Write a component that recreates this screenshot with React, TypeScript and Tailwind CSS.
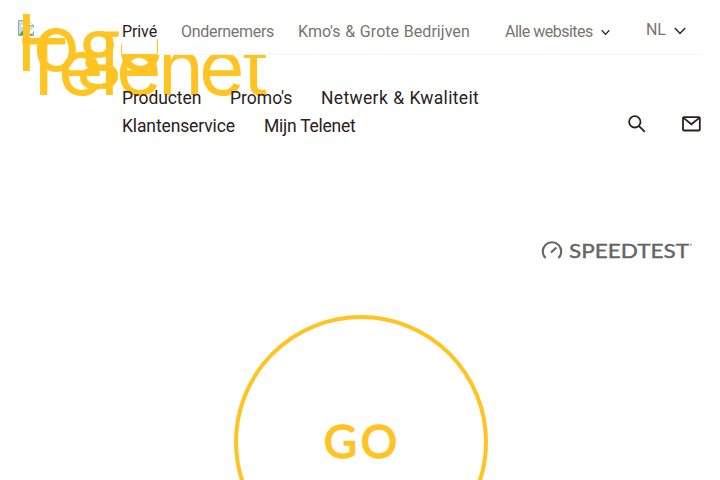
const topLinks = [
  { label: "Ondernemers", cls: "w-[116px] ml-[1px] pl-[23px] tracking-[-0.3px]" },
  { label: "Kmo's & Grote Bedrijven", cls: "w-[196px] pl-[24px] tracking-[0.05px] [word-spacing:0.6px]" },
];

function Chevron({ size, width }: { size: number; width: number }) {
  return (
    <svg width={size} height={size} viewBox="0 0 12 12" fill="none" stroke="#2a211c" strokeWidth={width}>
      <path d="M.9 3 6 8.4 11.1 3" />
    </svg>
  );
}

function BrokenImage() {
  return (
    <svg width="16" height="16" viewBox="0 0 16 16">
      <path d="M.5.5h10l5 5v10H.5z" fill="#c6d9f7" stroke="#a3a3a3" />
      <path d="M1 15 6 9l9 6z" fill="#4caf45" />
      <path d="M3 6q1-2 3-1 2 0 2 2H3z" fill="#fff" />
      <path d="M10.5.5v5h5" fill="#fff" stroke="#a3a3a3" />
      <path d="M16 7 7 16h3l6-5z" fill="#fff" />
    </svg>
  );
}

function Logo() {
  return (
    <div className="absolute left-[18px] top-[20px]">
      <BrokenImage />
      <svg className="absolute left-[-18px] top-[-20px]" width="280" height="110" fill="#ffc421" fontFamily="Inter, sans-serif" fontSize="78">
        <text y="71" x="17 33">lo</text>
        <text y="71" x="79.5" fontFamily="Open Sans, sans-serif" fontSize="74" stroke="#ffc421" strokeWidth=".8">g</text>
        <text y="71" x="117">o</text>
        <text y="95" x="18.5 58 100 116 158 199 243">Telenet</text>
      </svg>
    </div>
  );
}

function Header() {
  return (
    <header className="relative h-[145px] whitespace-nowrap">
      <Logo />
      <div className="relative ml-[122px] mr-[18px]">
        <div className="flex h-[55px] border-b border-[#f4f4f3] text-[16px] leading-[21px] text-[#7a736e]">
          <a className="h-[56px] w-[35px] border-b-2 border-[#ffc421] bg-white pt-[21px] tracking-[-0.1px] text-[#2a211c]">Privé</a>
          {topLinks.map((l) => (
            <a key={l.label} className={`bg-white pt-[21px] ${l.cls}`}>{l.label}</a>
          ))}
          <a className="ml-[35px] flex w-[106px] gap-[8px] pt-[21px]">
            <span className="w-[88px] tracking-[-0.5px]">Alle websites</span>
            <span className="pt-[7px]"><Chevron size={9} width={1.6} /></span>
          </a>
          <a className="ml-[35px] flex gap-[8px] pt-[19px]">
            <span className="w-[20px] tracking-[-0.2px]">NL</span>
            <span className="pt-[6px]"><Chevron size={12} width={1.4} /></span>
          </a>
        </div>
        <div className="flex justify-between pt-[29px] text-[#2a211c]">
          <nav className="text-[17.5px] leading-[28px]">
            <div className="flex gap-[29px]">
              <a className="w-[79px] tracking-[-0.1px]">Producten</a>
              <a className="w-[62px]">Promo's</a>
              <a className="tracking-[0.34px] [word-spacing:0.4px]">Netwerk &amp; Kwaliteit</a>
            </div>
            <div className="flex gap-[29px]">
              <a className="w-[113px] tracking-[-0.13px]">Klantenservice</a>
              <a className="tracking-[-0.25px]">Mijn Telenet</a>
            </div>
          </nav>
          <div className="flex gap-[35px] pt-[30px]">
            <svg width="20" height="20" viewBox="0 0 20 20" fill="none" stroke="#2a211c" strokeWidth="1.8">
              <circle cx="7.8" cy="7.8" r="5.7" />
              <path d="m11.8 11.8 6 6" />
            </svg>
            <svg width="20" height="20" viewBox="0 0 20 20" fill="none" stroke="#2a211c" strokeWidth="1.8">
              <rect x="1" y="3.1" width="16.8" height="13.4" rx="1" />
              <path d="m1.5 3.9 7.9 6.4 7.9-6.4" />
            </svg>
          </div>
        </div>
      </div>
    </header>
  );
}

export default function App() {
  return (
    <div className="h-[480px] w-[720px] overflow-hidden bg-white font-[Roboto,sans-serif]">
      <Header />
      <main>
        <div className="flex justify-end pr-[27px] pt-[90px]">
          <svg width="152" height="32" viewBox="0 0 152 32" fill="#656565">
            <path d="M4.6 23A9.2 9.2 0 1 1 17.4 23M10 17.6 15.4 12.4" fill="none" stroke="#656565" strokeWidth="2.1" />
            <text x="28" y="23" fontFamily="Lato, sans-serif" fontSize="20" stroke="#656565" strokeWidth=".4" textLength="120" lengthAdjust="spacingAndGlyphs">SPEEDTEST</text>
            <circle cx="150" cy="9.5" r="1" opacity=".6" />
          </svg>
        </div>
        <button className="ml-[234px] mt-[48px] flex size-[254px] items-center justify-center rounded-full border-4 border-[#ffc421]">
          <svg width="76" height="48" fill="#ffc421" stroke="#ffc421" strokeWidth="1.5" fontFamily="Lato, sans-serif" fontSize="45.5">
            <text x="0.8 37.8" y="39.5">GO</text>
          </svg>
        </button>
      </main>
    </div>
  );
}
